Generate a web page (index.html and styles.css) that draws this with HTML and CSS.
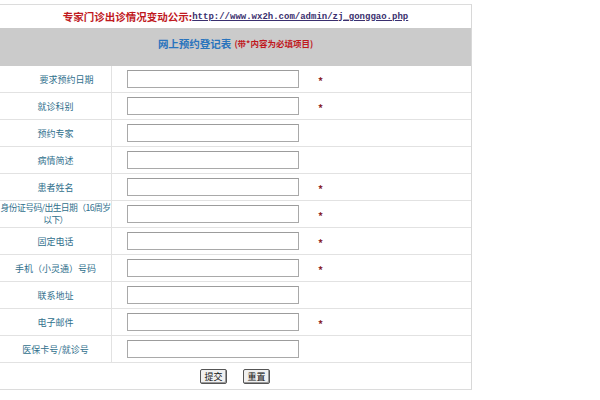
FILE: index.html
```html
<!DOCTYPE html>
<html lang="zh-CN">
<head>
<meta charset="utf-8">
<title>网上预约登记表</title>
<link rel="stylesheet" href="styles.css">
</head>
<body>
<div class="sheet">
  <div class="notice">
    <span class="notice-cn">专家门诊出诊情况变动公示:</span><a class="notice-url" href="#">http://www.wx2h.com/admin/zj_gonggao.php</a>
  </div>
  <div class="band">
    <span class="band-title">网上预约登记表</span>
    <span class="band-note">(带*内容为必填项目)</span>
  </div>
  <form class="form">
    <div class="row"><div class="label indent">要求预约日期</div><div class="field"><input class="box" type="text"><span class="req">*</span></div></div>
    <div class="row"><div class="label">就诊科别</div><div class="field"><input class="box" type="text"><span class="req">*</span></div></div>
    <div class="row"><div class="label">预约专家</div><div class="field"><input class="box" type="text"></div></div>
    <div class="row"><div class="label">病情简述</div><div class="field"><input class="box" type="text"></div></div>
    <div class="row"><div class="label">患者姓名</div><div class="field"><input class="box" type="text"><span class="req">*</span></div></div>
    <div class="row"><div class="label tight">身份证号码/出生日期（16周岁<br>以下）</div><div class="field"><input class="box" type="text"><span class="req">*</span></div></div>
    <div class="row"><div class="label">固定电话</div><div class="field"><input class="box" type="text"><span class="req">*</span></div></div>
    <div class="row"><div class="label">手机（小灵通）号码</div><div class="field"><input class="box" type="text"><span class="req">*</span></div></div>
    <div class="row"><div class="label">联系地址</div><div class="field"><input class="box" type="text"></div></div>
    <div class="row"><div class="label">电子邮件</div><div class="field"><input class="box" type="text"><span class="req">*</span></div></div>
    <div class="row"><div class="label">医保卡号/就诊号</div><div class="field"><input class="box" type="text"></div></div>
    <div class="actions">
      <button class="btn" type="button">提交</button>
      <button class="btn" type="reset">重置</button>
    </div>
  </form>
</div>
</body>
</html>
```

FILE: styles.css
```css
html, body {
  margin: 0;
  padding: 0;
  background: #ffffff;
}

body {
  font-family: "Noto Sans CJK SC", "DejaVu Sans", sans-serif;
  font-size: 9px;
}

.sheet {
  width: 471px;
  margin-top: 4px;
  border-top: 1px solid #dcdcdc;
  border-right: 1px solid #d8d8d8;
  border-bottom: 1px solid #dcdcdc;
}

.notice {
  height: 23px;
  display: flex;
  align-items: center;
  justify-content: center;
  font-weight: bold;
  font-size: 10px;
}

.notice-cn {
  color: #c0191e;
  font-family: "Noto Sans CJK SC", sans-serif;
  font-size: 10.5px;
}

.notice-url {
  color: #3a2f6e;
  font-family: "Liberation Mono", monospace;
  font-size: 9px;
  text-decoration: underline;
}

.band {
  height: 38px;
  background: #cbcbcb;
  display: flex;
  align-items: center;
  justify-content: center;
  gap: 3px;
  font-weight: bold;
  padding-bottom: 8px;
  box-sizing: border-box;
}

.band-title {
  color: #2a74bd;
  font-size: 10.5px;
}

.band-note {
  color: #c0191e;
  font-size: 8.5px;
}

.form {
  margin: 0;
}

.row {
  display: grid;
  grid-template-columns: 112px 1fr;
  height: 27px;
  box-sizing: border-box;
  border-bottom: 1px solid #e2e2e2;
}

.label {
  border-right: 1px solid #e2e2e2;
  color: #2f6f8c;
  display: flex;
  align-items: center;
  justify-content: center;
  text-align: center;
  line-height: 11px;
  padding-top: 1px;
}

.label.indent {
  padding-left: 22px;
}

.label.tight {
  white-space: nowrap;
  letter-spacing: -0.6px;
  font-size: 8.8px;
  line-height: 12px;
  padding-top: 0;
}

.field {
  display: flex;
  align-items: center;
  padding-left: 15px;
}

.box {
  width: 172px;
  height: 18px;
  box-sizing: border-box;
  border: 1px solid #a9a9a9;
  border-top-color: #9c9c9c;
  background: #ffffff;
  margin: 0;
  padding: 0;
}

.req {
  color: #8a1f2a;
  font-weight: bold;
  font-size: 10px;
  margin-left: 19px;
  padding-top: 3px;
}

.actions {
  height: 26px;
  display: flex;
  align-items: center;
  padding-left: 200px;
  gap: 16px;
}

.btn {
  font-family: "Noto Sans CJK SC", sans-serif;
  font-size: 9px;
  line-height: 11px;
  width: 27px;
  height: 15px;
  padding: 0;
  background: #f0f0f0;
  color: #111;
  border: 1px solid #555;
  border-radius: 2px;
  box-shadow: inset -1px -1px 0 #999;
}
```
